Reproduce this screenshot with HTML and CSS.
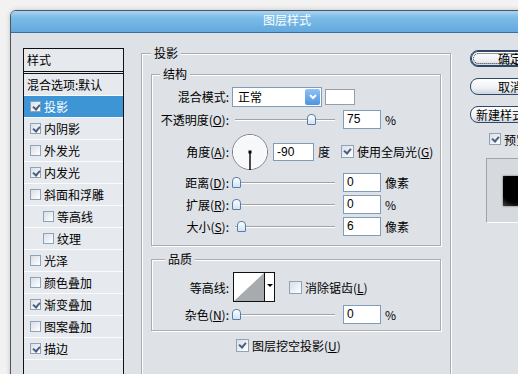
FILE: index.html
```html
<!DOCTYPE html>
<html lang="zh-CN">
<head>
  <meta charset="UTF-8" />
  <title>图层样式</title>
  <link rel="stylesheet" href="styles.css">
</head>
<body>

  <div class="window">
    <div class="titlebar">图层样式</div>

    <div class="client">

      <div class="style-list">
        <div class="list-head">样式</div>
        <div class="list-item plain">混合选项:默认</div>
        <div class="list-item selected"><span class="chk on"></span>投影</div>
        <div class="list-item"><span class="chk on"></span>内阴影</div>
        <div class="list-item"><span class="chk"></span>外发光</div>
        <div class="list-item"><span class="chk on"></span>内发光</div>
        <div class="list-item"><span class="chk"></span>斜面和浮雕</div>
        <div class="list-item sub"><span class="chk"></span>等高线</div>
        <div class="list-item sub"><span class="chk"></span>纹理</div>
        <div class="list-item"><span class="chk"></span>光泽</div>
        <div class="list-item"><span class="chk"></span>颜色叠加</div>
        <div class="list-item"><span class="chk on"></span>渐变叠加</div>
        <div class="list-item"><span class="chk"></span>图案叠加</div>
        <div class="list-item"><span class="chk on"></span>描边</div>
        <div class="list-item"></div>
      </div>

      <fieldset class="group outer">
        <legend>投影</legend>

        <fieldset class="group structure">
          <legend>结构</legend>

          <div class="row row-blend">
            <span class="lbl">混合模式:</span>
            <div class="select">
              <span class="select-text">正常</span>
              <span class="drop">
                <svg width="8" height="6" viewBox="0 0 8 6"><path d="M1 1 L4 4 L7 1" fill="none" stroke="#fff" stroke-width="2"/></svg>
              </span>
            </div>
            <span class="swatch"></span>
          </div>

          <div class="row row-opacity">
            <span class="lbl">不透明度(<u>O</u>):</span>
            <div class="slider"><span class="thumb" style="left: 75px"></span></div>
            <span class="field">75</span>
            <span class="unit">%</span>
          </div>

          <div class="row row-angle">
            <span class="lbl">角度(<u>A</u>):</span>
            <svg class="dial" width="38" height="38" viewBox="0 0 38 38">
              <circle cx="19" cy="19" r="17.5" fill="#f7f8fa" stroke="#7a7f86"/>
              <circle cx="19" cy="19" r="16.5" fill="none" stroke="#fff"/>
              <line x1="19" y1="19" x2="19" y2="37" stroke="#000" stroke-width="1.4"/>
              <rect x="17.5" y="17.5" width="3" height="3" fill="#000"/>
            </svg>
            <span class="field angle">-90</span>
            <span class="unit">度</span>
            <span class="chk on global"></span>
            <span class="nowrap">使用全局光(<u>G</u>)</span>
          </div>

          <div class="row row-slider">
            <span class="lbl">距离(<u>D</u>):</span>
            <div class="slider"><span class="thumb" style="left: 0px"></span></div>
            <span class="field">0</span>
            <span class="unit">像素</span>
          </div>

          <div class="row row-slider">
            <span class="lbl">扩展(<u>R</u>):</span>
            <div class="slider"><span class="thumb" style="left: 0px"></span></div>
            <span class="field">0</span>
            <span class="unit">%</span>
          </div>

          <div class="row row-slider">
            <span class="lbl">大小(<u>S</u>):</span>
            <div class="slider"><span class="thumb" style="left: 5px"></span></div>
            <span class="field">6</span>
            <span class="unit">像素</span>
          </div>
        </fieldset>

        <fieldset class="group quality">
          <legend>品质</legend>

          <div class="row row-contour">
            <span class="lbl">等高线:</span>
            <div class="contour">
              <svg width="30" height="28" viewBox="0 0 30 28">
                <rect width="30" height="28" fill="#fff"/>
                <polygon points="0,28 30,0 30,28" fill="#a7aaae"/>
              </svg>
              <span class="contour-drop"></span>
            </div>
            <span class="chk aa"></span>
            <span class="nowrap">消除锯齿(<u>L</u>)</span>
          </div>

          <div class="row row-slider">
            <span class="lbl">杂色(<u>N</u>):</span>
            <div class="slider"><span class="thumb" style="left: 0px"></span></div>
            <span class="field">0</span>
            <span class="unit">%</span>
          </div>
        </fieldset>

        <div class="knockout">
          <span class="chk on"></span>
          <span>图层挖空投影(<u>U</u>)</span>
        </div>
      </fieldset>

      <div class="side">
        <button class="btn default"><span>确定</span></button>
        <button class="btn">取消</button>
        <button class="btn new">新建样式(<u>W</u>)...</button>
        <div class="preview-check"><span class="chk on"></span>预览(<u>V</u>)</div>
        <div class="preview-box"><div class="preview-swatch"></div></div>
      </div>

    </div>
  </div>

</body>
</html>
```

FILE: styles.css
```css
* { box-sizing: border-box; }

html, body {
  margin: 0;
  height: 374px;
  overflow: hidden;
  background: #f2f2f2;
  font-family: "Noto Sans CJK SC", "Liberation Sans", sans-serif;
  font-size: 12px;
  color: #000;
}

u { text-decoration: underline; text-underline-offset: 1px; }

.nowrap { white-space: nowrap; }

.window {
  margin: 10px 0 0 10px;
  width: 554px;
  height: 460px;
  border: 1px solid #50555b;
  border-radius: 6px 6px 0 0;
  background: #dee1e6;
  box-shadow: 0 0 5px rgba(0, 0, 0, 0.2);
  overflow: hidden;
}

.titlebar {
  height: 22px;
  background: linear-gradient(#a9d4f2, #7dbce9 30%, #63a9de);
  border-bottom: 1px solid #3d6f98;
  color: #fff;
  text-align: center;
  line-height: 17px;
  font-size: 12px;
}

.client {
  display: flex;
  align-items: flex-start;
  padding: 13px 0 0 12px;
}

/* left style list */
.style-list {
  margin-top: 2px;
  width: 101px;
  height: 400px;
  border: 1px solid #111;
  background: #e6e9ed;
}

.list-head {
  height: 25px;
  padding-left: 3px;
  line-height: 22px;
  border-bottom: 3px double #111;
}

.list-item {
  height: 22px;
  display: flex;
  align-items: center;
  padding-left: 6px;
  border-bottom: 1px solid #fbfcfd;
}

.list-item.plain { padding-left: 3px; }
.list-item.sub { padding-left: 19px; }

.list-item.selected {
  background: #3d95d5;
  color: #fff;
}

.list-item .chk {
  width: 11px;
  height: 11px;
  margin-right: 3px;
}

/* checkboxes */
.chk {
  position: relative;
  display: inline-block;
  flex: none;
  width: 13px;
  height: 13px;
  border: 1px solid #8ea3b8;
  background: linear-gradient(135deg, #d8dfe7, #fff);
}

.chk.on::after {
  content: '';
  position: absolute;
  left: 2px;
  top: 2px;
  width: 5px;
  height: 3px;
  border-left: 2px solid #4a5f80;
  border-bottom: 2px solid #4a5f80;
  transform: rotate(-50deg);
}

/* group boxes */
.group {
  margin: 0;
  border: 1px solid #a9adb3;
  box-shadow: 1px 1px 0 #fff, inset 1px 1px 0 #fff;
  padding: 0;
  min-width: 0;
}

.group legend {
  padding: 0 3px;
  line-height: 14px;
  background: #dee1e6;
}

.outer {
  margin-left: 17px;
  width: 310px;
  height: 420px;
  padding: 7px 9px 0;
}

.structure {
  padding: 0 0 9px;
}

.structure legend { margin-left: 8px; }

.quality {
  margin-top: 6px;
  padding: 0 0 6px;
}

.quality legend { margin-left: 13px; }

/* rows */
.row {
  display: flex;
  align-items: center;
}

.lbl {
  width: 77px;
  text-align: right;
  margin-right: 3px;
  white-space: nowrap;
}

.row-blend { margin-top: 5px; height: 21px; }
.row-opacity { margin-top: 2px; height: 20px; }
.row-angle { margin-top: 4px; height: 37px; }
.row-slider { margin-top: 3px; height: 19px; }
.row-contour { margin-top: 6px; height: 30px; }

.structure .row-slider:first-of-type { margin-top: 4px; }

.select {
  display: flex;
  align-items: center;
  width: 90px;
  height: 20px;
  border: 1px solid #7f9db9;
  background: #fff;
  padding: 1px;
}

.select-text {
  flex: 1;
  padding-left: 4px;
}

.drop {
  width: 15px;
  height: 16px;
  border-radius: 2px;
  background: linear-gradient(#8fc2f4, #4c93e0);
  display: flex;
  align-items: center;
  justify-content: center;
}

.swatch {
  margin-left: 3px;
  width: 30px;
  height: 16px;
  border: 1px solid #9a9ea4;
  background: #fff;
}

.slider {
  position: relative;
  width: 103px;
  height: 19px;
}

.slider::before {
  content: '';
  position: absolute;
  left: 3px;
  right: 0;
  top: 9px;
  height: 1px;
  background: #9fa4aa;
  box-shadow: 0 1px 0 #fff;
}

.thumb {
  position: absolute;
  top: 4px;
  width: 9px;
  height: 11px;
  border: 1px solid #5a7ea3;
  border-radius: 4px 4px 1px 1px;
  background: linear-gradient(#fff, #cfe3f5);
}

.field {
  margin-left: 8px;
  width: 38px;
  height: 19px;
  border: 1px solid #7f9db9;
  background: #fff;
  padding-left: 3px;
  line-height: 17px;
  font-family: "Liberation Sans", sans-serif;
  font-size: 12px;
}

.unit { margin-left: 4px; }

.dial { margin-left: -1px; flex: none; }

.field.angle {
  margin-left: 4px;
  width: 41px;
  height: 18px;
}

.chk.global { margin: 0 3px 0 11px; }

.contour {
  display: flex;
  margin-left: 1px;
  height: 30px;
  border: 1px solid #111;
}

.contour-drop {
  position: relative;
  width: 10px;
  border-left: 1px solid #111;
  background: #fff;
}

.contour-drop::after {
  content: '';
  position: absolute;
  left: 2px;
  top: 11px;
  border: 3px solid transparent;
  border-top: 3px solid #000;
}

.chk.aa { margin: 0 3px 0 14px; }

.knockout {
  display: flex;
  align-items: center;
  gap: 3px;
  margin-top: 6px;
  padding-left: 85px;
}

/* right column */
.side {
  margin-left: 19px;
  padding-top: 4px;
  display: flex;
  flex-direction: column;
}

.btn {
  width: 80px;
  height: 17px;
  padding: 0;
  border: 1px solid #2d4766;
  border-radius: 8px;
  background: linear-gradient(#ffffff, #eef1f4 60%, #cdd5de);
  font-family: inherit;
  font-size: 12px;
  line-height: 14px;
  color: #000;
}

.btn + .btn { margin-top: 11px; }

.btn.default {
  box-shadow: inset 0 0 0 1px #2d4766;
  padding: 2px;
}

.btn.default span {
  display: block;
  height: 100%;
  border: 1px dotted #333;
  border-radius: 6px;
  line-height: 10px;
}

.btn.new { white-space: nowrap; text-align: left; padding-left: 5px; }

.preview-check {
  display: flex;
  align-items: center;
  gap: 3px;
  margin-top: 9px;
  padding-left: 19px;
  height: 14px;
}

.preview-check .chk { width: 12px; height: 12px; }

.preview-box {
  margin-top: 12px;
  margin-left: 16px;
  width: 70px;
  height: 65px;
  border: 1px solid;
  border-color: #a0a4aa #fff #fff #a0a4aa;
  background: #d6d9dd;
  padding: 17px 0 0 16px;
}

.preview-swatch {
  width: 32px;
  height: 30px;
  background: radial-gradient(circle at 40% 40%, #000 55%, #3a3a3a 80%, #888);
  box-shadow: 0 0 2px #666;
}
```
